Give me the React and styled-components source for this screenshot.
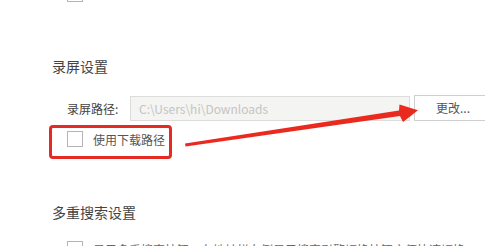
import React from "react";
import styled, { createGlobalStyle } from "styled-components";

const Global = createGlobalStyle`
  html, body { margin: 0; padding: 0; background: #fff; }
  body { font-family: "Microsoft YaHei", "Noto Sans CJK SC", "Noto Sans", sans-serif; }
`;

const Page = styled.div`
  position: relative;
  width: 485px;
  height: 246px;
  overflow: hidden;
  padding-left: 52px;
  box-sizing: border-box;
  display: flex;
  flex-direction: column;
  color: #444;
`;

const Box = styled.span`
  flex: none;
  width: 14px;
  height: 14px;
  border: 1px solid #b4b4b4;
  background: #fff;
  display: inline-block;
`;

const CheckRow = styled.div`
  display: flex;
  align-items: center;
  gap: 10px;
  padding-left: 15px;
  margin-top: ${(p) => p.$mt || 0}px;
  height: 16px;
  flex: none;
  font-size: 12px;
  color: #666;
  white-space: nowrap;
`;

const Heading = styled.div`
  margin-top: ${(p) => p.$mt}px;
  font-size: 14px;
  line-height: 20px;
  height: 20px;
  flex: none;
  color: #444;
`;

const PathRow = styled.div`
  display: flex;
  align-items: center;
  margin-top: 19px;
  height: 26px;
  flex: none;
`;

const Label = styled.span`
  width: 63px;
  padding-left: 15px;
  font-size: 12px;
  color: #444;
  flex: none;
`;

const Input = styled.div`
  box-sizing: border-box;
  width: 280px;
  height: 25px;
  border: 1px solid #dcdcdc;
  background: #f4f4f2;
  color: #c4c4c4;
  font-size: 12px;
  line-height: 23px;
  padding-left: 8px;
  flex: none;
`;

const Button = styled.div`
  box-sizing: border-box;
  margin-left: 4px;
  width: 90px;
  height: 26px;
  border: 1px solid #cfcfcf;
  background: #fff;
  color: #555;
  font-size: 12px;
  line-height: 24px;
  padding-left: 21px;
  flex: none;
`;

const Highlight = styled.div`
  box-sizing: border-box;
  margin-top: 4px;
  margin-left: -3px;
  width: 123px;
  height: 34px;
  flex: none;
  border: 3px solid #e42a22;
  border-radius: 4px;
  display: flex;
  align-items: flex-start;
  padding-top: 3px;
`;

const InnerCheck = styled.label`
  display: flex;
  align-items: center;
  gap: 10px;
  padding-left: 15px;
  height: 16px;
  font-size: 12px;
  color: #555;
  white-space: nowrap;
`;

const Overlay = styled.svg`
  position: absolute;
  left: 0;
  top: 0;
  pointer-events: none;
`;

export default function App() {
  return (
    <>
      <Global />
      <Page>
        <CheckRow $mt={-14}>
          <Box />
        </CheckRow>
        <Heading $mt={54}>录屏设置</Heading>
        <PathRow>
          <Label>录屏路径:</Label>
          <Input>C:\Users\hi\Downloads</Input>
          <Button>更改...</Button>
        </PathRow>
        <Highlight>
          <InnerCheck>
            <Box />
            使用下载路径
          </InnerCheck>
        </Highlight>
        <Heading $mt={43}>多重搜索设置</Heading>
        <CheckRow $mt={19}>
          <Box />
          显示多重搜索按钮，在地址栏右侧显示搜索引擎切换按钮方便快速切换
        </CheckRow>
        <Overlay width="485" height="246" viewBox="0 0 485 246">
          <polygon
            points="185,143.6 399,110.6 399.5,104.5 418,110.2 403,122 400,116 185.5,146.6"
            fill="#ea2a1f"
          />
        </Overlay>
      </Page>
    </>
  );
}
